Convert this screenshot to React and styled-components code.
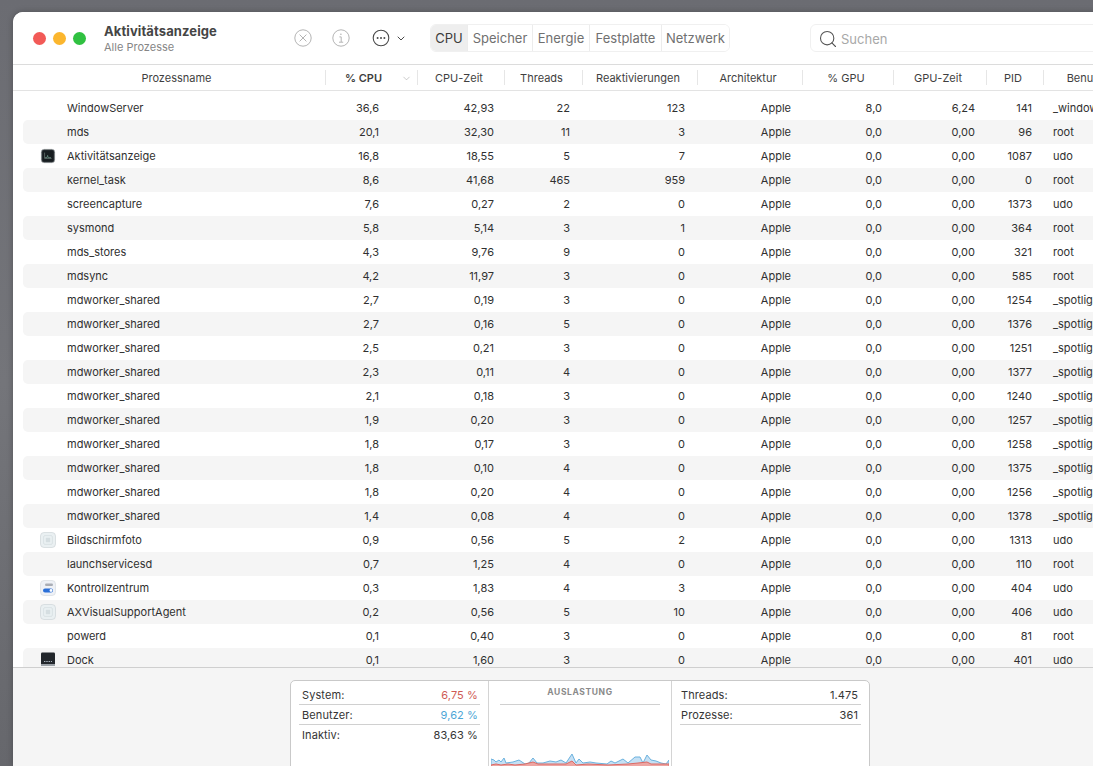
import React from "react"
import styled, { createGlobalStyle } from "styled-components"
import { ChevronDown, Search } from "lucide-react"

const COLUMNS = "303px 92px 87px 78px 115px 105px 91px 93px 57px 96px"

const Global = createGlobalStyle`
  html, body {
    margin: 0;
    padding: 0;
    height: 100%;
    overflow: hidden;
    background: #6d6e73;
    font-family: Inter, "Noto Sans", sans-serif;
    -webkit-font-smoothing: antialiased;
  }
`

const Desktop = styled.div`
  width: 1093px;
  height: 766px;
  overflow: hidden;
  padding: 12px 0 0 13px;
  box-sizing: border-box;
  background: linear-gradient(180deg, #6b6c72 0%, #74757a 50%, #66676c 100%);
`

const Window = styled.div`
  width: 1140px;
  height: 754px;
  background: #fff;
  border-top-left-radius: 10px;
  border-top-right-radius: 10px;
  box-shadow: 0 0 6px rgba(0, 0, 0, 0.25);
  display: flex;
  flex-direction: column;
  overflow: hidden;
`

const Toolbar = styled.div`
  height: 52px;
  flex: none;
  display: flex;
  align-items: center;
  background: #fff;
  border-bottom: 1px solid #dcdcdc;
`

const Lights = styled.div`
  display: flex;
  gap: 7px;
  margin-left: 20px;
`

const Light = styled.span`
  width: 13px;
  height: 13px;
  border-radius: 50%;
  background: ${(p) => p.$color};
`

const TitleBlock = styled.div`
  margin-left: 18px;
  width: 189px;
  display: flex;
  flex-direction: column;
  gap: 1px;
`

const AppTitle = styled.div`
  font-size: 13px;
  line-height: 16px;
  font-weight: 700;
  letter-spacing: 0.1px;
  color: #454545;
`

const AppSub = styled.div`
  font-size: 11px;
  line-height: 14px;
  color: #868686;
`

const ToolIcon = styled.div`
  display: flex;
  align-items: center;
  flex: none;
  width: ${(p) => p.$w}px;
  color: ${(p) => p.$color};
`

const MoreChevron = styled(ChevronDown)`
  margin-left: 5px;
`

const Tabs = styled.div`
  display: flex;
  height: 28px;
  margin-left: 23px;
  box-sizing: border-box;
  border: 1px solid #f0f0f0;
  border-radius: 6px;
  overflow: hidden;
`

const Tab = styled.div`
  display: flex;
  align-items: center;
  justify-content: center;
  box-sizing: border-box;
  width: ${(p) => p.$w}px;
  font-size: 13px;
  color: ${(p) => (p.$active ? "#3c3c3c" : "#707070")};
  background: ${(p) => (p.$active ? "#eeeeee" : "#fff")};
  border-left: ${(p) => (p.$first ? "none" : "1px solid #ececec")};
`

const SearchBox = styled.div`
  margin-left: 80px;
  width: 300px;
  height: 28px;
  box-sizing: border-box;
  flex: none;
  display: flex;
  align-items: center;
  gap: 3px;
  padding: 1px 0 0 7px;
  border: 1px solid #f0f0f0;
  border-radius: 6px;
  font-size: 13px;
  color: #a8a8a8;
`

const HeaderRow = styled.div`
  height: 25px;
  flex: none;
  display: grid;
  grid-template-columns: ${COLUMNS};
  padding-left: 10px;
  align-items: center;
  border-bottom: 1px solid #e3e3e3;
`

const HeaderCell = styled.div`
  position: relative;
  height: 15px;
  display: flex;
  align-items: center;
  justify-content: center;
  font-size: 11px;
  font-weight: ${(p) => (p.$sorted ? 600 : 400)};
  color: #3f3f3f;
  padding: 0 ${(p) => p.$right}px 0 ${(p) => p.$left}px;
  box-sizing: border-box;
  border-right: ${(p) => (p.$last ? "none" : "1px solid #e6e6e6")};
  white-space: nowrap;
  overflow: hidden;
`

const SortArrow = styled(ChevronDown)`
  position: absolute;
  right: 5px;
  top: 3px;
  color: #a0a0a0;
`

const Rows = styled.div`
  flex: 1;
  min-height: 0;
  overflow: hidden;
  padding: 5px 0 0 10px;
`

const Row = styled.div`
  height: 24px;
  display: grid;
  grid-template-columns: ${COLUMNS};
  align-items: center;
  font-size: 11px;
  color: #303030;
  background: ${(p) => (p.$odd ? "#f5f5f5" : "#fff")};
  border-top-left-radius: 5px;
  border-bottom-left-radius: 5px;
`

const NameCell = styled.div`
  display: flex;
  align-items: center;
  white-space: nowrap;
`

const IconSlot = styled.div`
  width: 16px;
  height: 16px;
  margin: 0 11px 0 17px;
  flex: none;
  display: flex;
`

const Num = styled.div`
  text-align: right;
  padding-right: ${(p) => p.$pad}px;
`

const UserCell = styled.div`
  padding-left: 9px;
  white-space: nowrap;
  overflow: hidden;
`

const Footer = styled.div`
  flex: none;
  height: 99px;
  background: #f5f5f5;
  border-top: 1px solid #cfcfcf;
  box-sizing: border-box;
  padding: 12px 0 0 277px;
  overflow: hidden;
`

const Panel = styled.div`
  width: 580px;
  height: 100px;
  box-sizing: border-box;
  background: #fff;
  border: 1px solid #c9c9c9;
  border-radius: 5px;
  display: grid;
  grid-template-columns: 197px 184px 1fr;
`

const StatBlock = styled.div`
  padding: 4px 8px 0 8px;
`

const StatRow = styled.div`
  height: 20px;
  box-sizing: border-box;
  display: flex;
  justify-content: space-between;
  align-items: center;
  padding: 0 ${(p) => (p.$narrow ? "3px 0 1px" : "2px 0 3px")};
  font-size: 11px;
  letter-spacing: 0.1px;
  color: #353535;
  border-bottom: ${(p) => (p.$plain ? "none" : "1px solid #d0d0d0")};
`

const StatValue = styled.span`
  color: ${(p) => p.$color || "#353535"};
`

const ChartBlock = styled.div`
  border-left: 1px solid #d4d4d4;
  border-right: 1px solid #d4d4d4;
  display: flex;
  flex-direction: column;
  align-items: center;
  padding-top: 6px;
`

const ChartTitle = styled.div`
  width: 160px;
  height: 17px;
  text-align: center;
  font-size: 8.5px;
  line-height: 10px;
  font-weight: 700;
  letter-spacing: 0.6px;
  color: #8a8a8a;
  border-bottom: 1px solid #d0d0d0;
`

const Chart = styled.svg`
  display: block;
  margin-top: 47px;
  flex: none;
`

const RawIcon = styled.svg`
  display: block;
`

const StopIcon = () => (
  <svg width="20" height="20" viewBox="0 0 20 20" fill="none" stroke="#b4b4b4" strokeWidth="1">
    <circle cx="10" cy="10" r="8.2" />
    <path d="M6.6 6.6L13.4 13.4M13.4 6.6L6.6 13.4" />
  </svg>
)

const InfoIcon = () => (
  <svg width="20" height="20" viewBox="0 0 20 20" fill="none" stroke="#b4b4b4" strokeWidth="1">
    <circle cx="10" cy="10" r="8.2" />
    <path d="M8.4 8.9H10.2V14M8 14.2H12.2" />
    <circle cx="9.9" cy="6.2" r="0.8" fill="#b4b4b4" stroke="none" />
  </svg>
)

const EllipsisIcon = () => (
  <svg width="18" height="18" viewBox="0 0 18 18" fill="none">
    <circle cx="9" cy="9" r="7.8" stroke="#4a4a4a" strokeWidth="1.1" />
    <circle cx="5.6" cy="9" r="1" fill="#4a4a4a" />
    <circle cx="9" cy="9" r="1" fill="#4a4a4a" />
    <circle cx="12.4" cy="9" r="1" fill="#4a4a4a" />
  </svg>
)

const ActivityIcon = () => (
  <RawIcon width="16" height="16" viewBox="0 0 16 16">
    <rect x="1.2" y="1.2" width="13.6" height="13.6" rx="3" fill="#2c3236" stroke="#c4c8ca" strokeWidth="0.5" />
    <rect x="2.6" y="2.6" width="10.8" height="10.8" rx="1.6" fill="#171d20" />
    <path d="M4.6 4.6V10.4H11.6" stroke="#7f8f8a" strokeWidth="0.6" fill="none" />
    <path d="M5 9.6H7L7.6 7.4L8.2 9.6H11" stroke="#8fc4ae" strokeWidth="0.5" fill="none" />
  </RawIcon>
)

const BlankAppIcon = () => (
  <RawIcon width="16" height="16" viewBox="0 0 16 16" fill="none">
    <rect x="0.5" y="0.5" width="15" height="15" rx="3.5" fill="#eaf0f2" stroke="#cfd6d9" strokeWidth="0.7" />
    <rect x="3.6" y="3.6" width="8.8" height="8.8" rx="1.4" stroke="#d5dee1" strokeWidth="0.8" />
    <rect x="5.8" y="5.8" width="4.4" height="4.4" rx="0.6" fill="#d5dee1" />
  </RawIcon>
)

const ControlIcon = () => (
  <RawIcon width="16" height="16" viewBox="0 0 16 16">
    <rect x="0.5" y="0.5" width="15" height="15" rx="3.5" fill="#eef1f6" stroke="#d4d8de" strokeWidth="0.6" />
    <rect x="5" y="3.5" width="8" height="2.6" rx="1.3" fill="#a9adb5" />
    <rect x="3" y="8.5" width="10" height="4" rx="2" fill="#2a6fd8" />
    <circle cx="11" cy="10.5" r="1.4" fill="#fff" />
  </RawIcon>
)

const DockIcon = () => (
  <RawIcon width="16" height="16" viewBox="0 0 16 16">
    <rect x="1" y="0.5" width="14" height="13" rx="1.2" fill="#23272c" />
    <rect x="1" y="12" width="14" height="2" fill="#9aa0a6" />
    <path d="M4 9.5H12" stroke="#a9b4bd" strokeWidth="1.2" strokeDasharray="1.4 0.9" />
  </RawIcon>
)

const ICONS = {
  activity: ActivityIcon,
  blank: BlankAppIcon,
  control: ControlIcon,
  dock: DockIcon,
}

const USER_SPOT = "_spotlight"

const PROCESSES = [
  ["WindowServer", "36,6", "42,93", "22", "123", "8,0", "6,24", "141", "_windowserver"],
  ["mds", "20,1", "32,30", "11", "3", "0,0", "0,00", "96", "root"],
  ["Aktivitätsanzeige", "16,8", "18,55", "5", "7", "0,0", "0,00", "1087", "udo", "activity"],
  ["kernel_task", "8,6", "41,68", "465", "959", "0,0", "0,00", "0", "root"],
  ["screencapture", "7,6", "0,27", "2", "0", "0,0", "0,00", "1373", "udo"],
  ["sysmond", "5,8", "5,14", "3", "1", "0,0", "0,00", "364", "root"],
  ["mds_stores", "4,3", "9,76", "9", "0", "0,0", "0,00", "321", "root"],
  ["mdsync", "4,2", "11,97", "3", "0", "0,0", "0,00", "585", "root"],
  ["mdworker_shared", "2,7", "0,19", "3", "0", "0,0", "0,00", "1254", USER_SPOT],
  ["mdworker_shared", "2,7", "0,16", "5", "0", "0,0", "0,00", "1376", USER_SPOT],
  ["mdworker_shared", "2,5", "0,21", "3", "0", "0,0", "0,00", "1251", USER_SPOT],
  ["mdworker_shared", "2,3", "0,11", "4", "0", "0,0", "0,00", "1377", USER_SPOT],
  ["mdworker_shared", "2,1", "0,18", "3", "0", "0,0", "0,00", "1240", USER_SPOT],
  ["mdworker_shared", "1,9", "0,20", "3", "0", "0,0", "0,00", "1257", USER_SPOT],
  ["mdworker_shared", "1,8", "0,17", "3", "0", "0,0", "0,00", "1258", USER_SPOT],
  ["mdworker_shared", "1,8", "0,10", "4", "0", "0,0", "0,00", "1375", USER_SPOT],
  ["mdworker_shared", "1,8", "0,20", "4", "0", "0,0", "0,00", "1256", USER_SPOT],
  ["mdworker_shared", "1,4", "0,08", "4", "0", "0,0", "0,00", "1378", USER_SPOT],
  ["Bildschirmfoto", "0,9", "0,56", "5", "2", "0,0", "0,00", "1313", "udo", "blank"],
  ["launchservicesd", "0,7", "1,25", "4", "0", "0,0", "0,00", "110", "root"],
  ["Kontrollzentrum", "0,3", "1,83", "4", "3", "0,0", "0,00", "404", "udo", "control"],
  ["AXVisualSupportAgent", "0,2", "0,56", "5", "10", "0,0", "0,00", "406", "udo", "blank"],
  ["powerd", "0,1", "0,40", "3", "0", "0,0", "0,00", "81", "root"],
  ["Dock", "0,1", "1,60", "3", "0", "0,0", "0,00", "401", "udo", "dock"],
]

const HEADERS = [
  "Prozessname",
  "% CPU",
  "CPU-Zeit",
  "Threads",
  "Reaktivierungen",
  "Architektur",
  "% GPU",
  "GPU-Zeit",
  "PID",
  "Benutzer",
]

// traced from the chart, [x, y] in px inside the svg
const USER_LINE = [
  [0, 7], [3, 8], [5, 10], [8, 8], [10, 10], [13, 6], [15, 11], [22, 10], [28, 8], [34, 12],
  [38, 11], [42, 6], [46, 11], [52, 11], [59, 9], [65, 10], [70, 8], [75, 11], [81, 2], [85, 11],
  [88, 7], [92, 11], [99, 10], [105, 11], [116, 12], [120, 9], [124, 11], [132, 7], [137, 11], [144, 5],
  [149, 5], [152, 11], [156, 3], [160, 8], [165, 9], [170, 11], [175, 12], [178, 8],
]
const SYS_LINE = [
  [0, 13], [5, 12], [10, 13], [17, 12], [24, 13], [34, 12], [42, 10], [47, 12], [64, 12], [75, 12],
  [81, 9], [85, 13], [97, 12], [117, 13], [137, 12], [147, 11], [156, 10], [160, 12], [178, 12],
]

const toPoints = (line, w, h) => `0,${h} ${line.map(([x, y]) => `${x},${y}`).join(" ")} ${w},${h}`

const LoadChart = () => {
  const w = 178
  const h = 16
  return (
    <Chart width={w} height={h} viewBox={`0 0 ${w} ${h}`}>
      <polygon points={toPoints(USER_LINE, w, h)} fill="#c5e0f4" stroke="#6cb2de" strokeWidth="1" />
      <polygon points={toPoints(SYS_LINE, w, h)} fill="#eda5a2" stroke="#dc6a64" strokeWidth="1" />
    </Chart>
  )
}

const headerLeft = (i) => (i === 0 ? 5 : 0)
const headerRight = (i) => {
  if (i === 0) return 0
  return i === 1 ? 16 : 4
}

const App = () => (
  <>
    <Global />
    <Desktop>
      <Window>
        <Toolbar>
          <Lights>
            <Light $color="#f25a57" />
            <Light $color="#fbb62e" />
            <Light $color="#30c141" />
          </Lights>
          <TitleBlock>
            <AppTitle>Aktivitätsanzeige</AppTitle>
            <AppSub>Alle Prozesse</AppSub>
          </TitleBlock>
          <ToolIcon $w={38}>
            <StopIcon />
          </ToolIcon>
          <ToolIcon $w={41}>
            <InfoIcon />
          </ToolIcon>
          <ToolIcon $w={18}>
            <EllipsisIcon />
          </ToolIcon>
          <ToolIcon $w={17} $color="#4a4a4a">
            <MoreChevron size={13} strokeWidth={2} />
          </ToolIcon>
          <Tabs>
            <Tab $w={36} $active $first>CPU</Tab>
            <Tab $w={65}>Speicher</Tab>
            <Tab $w={57}>Energie</Tab>
            <Tab $w={72}>Festplatte</Tab>
            <Tab $w={68}>Netzwerk</Tab>
          </Tabs>
          <SearchBox>
            <Search size={20} strokeWidth={1.3} color="#555" />
            Suchen
          </SearchBox>
        </Toolbar>
        <HeaderRow>
          {HEADERS.map((h, i) => (
            <HeaderCell
              key={h}
              $sorted={i === 1}
              $last={i === HEADERS.length - 1}
              $left={headerLeft(i)}
              $right={headerRight(i)}
            >
              {h}
              {i === 1 && <SortArrow size={11} strokeWidth={1.2} />}
            </HeaderCell>
          ))}
        </HeaderRow>
        <Rows>
          {PROCESSES.map((p, i) => {
            const Icon = ICONS[p[9]]
            return (
              <Row key={p[7]} $odd={i % 2 === 1}>
                <NameCell>
                  <IconSlot>{Icon && <Icon />}</IconSlot>
                  {p[0]}
                </NameCell>
                <Num $pad={39}>{p[1]}</Num>
                <Num $pad={11}>{p[2]}</Num>
                <Num $pad={13}>{p[3]}</Num>
                <Num $pad={13}>{p[4]}</Num>
                <Num $pad={12}>Apple</Num>
                <Num $pad={12}>{p[5]}</Num>
                <Num $pad={12}>{p[6]}</Num>
                <Num $pad={12}>{p[7]}</Num>
                <UserCell>{p[8]}</UserCell>
              </Row>
            )
          })}
        </Rows>
        <Footer>
          <Panel>
            <StatBlock>
              <StatRow>
                System:
                <StatValue $color="#cf5b55">6,75 %</StatValue>
              </StatRow>
              <StatRow>
                Benutzer:
                <StatValue $color="#4ea6d6">9,62 %</StatValue>
              </StatRow>
              <StatRow $plain>
                Inaktiv:
                <StatValue>83,63 %</StatValue>
              </StatRow>
            </StatBlock>
            <ChartBlock>
              <ChartTitle>AUSLASTUNG</ChartTitle>
              <LoadChart />
            </ChartBlock>
            <StatBlock>
              <StatRow $narrow>
                Threads:
                <StatValue>1.475</StatValue>
              </StatRow>
              <StatRow $narrow>
                Prozesse:
                <StatValue>361</StatValue>
              </StatRow>
            </StatBlock>
          </Panel>
        </Footer>
      </Window>
    </Desktop>
  </>
)

export default App
